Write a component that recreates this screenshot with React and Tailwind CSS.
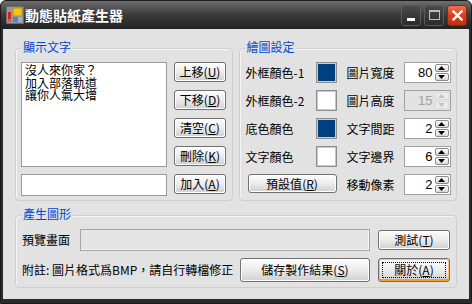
import React from "react";

const FONT = { fontFamily: '"Noto Sans CJK TC", "Liberation Sans", sans-serif' };

const Btn = ({ children, className = "", focused = false }) => (
    <button
        className={
            "relative flex items-center justify-center rounded-[3px] border border-[#707070] bg-linear-to-b from-[#fdfdfd] via-[#ececec] to-[#cfcfcf] text-[12px] leading-none text-black " +
            (focused ? "shadow-[inset_0_-2px_0_#f0a030,inset_0_0_0_1px_#f6c27a] " : "shadow-[inset_0_0_0_1px_#ffffff] ") +
            className
        }
    >
        {focused && <span className="absolute inset-[3px] border border-dotted border-black" />}
        <span className="relative">{children}</span>
    </button>
);

const Mn = ({ k }) => (
    <span>
        (<u className="underline-offset-1">{k}</u>)
    </span>
);

const Group = ({ label, className = "", children }) => (
    <div className={"relative rounded-[4px] border border-[#cfcfcf] shadow-[inset_1px_1px_0_#f4f4f4] " + className}>
        <span className="absolute left-[5px] top-[-9px] bg-[#e2e2e2] px-[2px] text-[12px] leading-[14px] text-[#0046d5]">
            {label}
        </span>
        {children}
    </div>
);

const Arrow = ({ up, disabled }) => (
    <svg width="7" height="4" viewBox="0 0 7 4">
        <polygon points={up ? "0,4 3.5,0 7,4" : "0,0 3.5,4 7,0"} fill={disabled ? "#c4c4c4" : "#000"} />
    </svg>
);

const Spin = ({ value, disabled = false }) => (
    <div
        className={
            "flex h-[21px] w-[47px] border border-[#a0a0a0] " +
            (disabled ? "bg-[#e2e2e2]" : "bg-white")
        }
    >
        <div
            className={
                "flex flex-1 items-center justify-end pr-[2px] text-[13px] leading-none " +
                (disabled ? "text-[#a0a0a0]" : "text-black")
            }
            style={{ fontFamily: '"Liberation Sans", sans-serif' }}
        >
            {value}
        </div>
        <div className="flex w-[15px] flex-col gap-[1px] py-[1px] pr-[1px]">
            {[true, false].map(up => (
                <div
                    key={up ? "u" : "d"}
                    className={
                        "flex flex-1 items-center justify-center rounded-[2px] border " +
                        (disabled
                            ? "border-[#dcdcdc] bg-[#ebebeb]"
                            : "border-[#8a8a8a] bg-linear-to-b from-white to-[#d8d8d8]")
                    }
                >
                    <Arrow up={up} disabled={disabled} />
                </div>
            ))}
        </div>
    </div>
);

const Swatch = ({ color }) => (
    <div className="h-[21px] w-[21px] border border-[#8e8e8e] shadow-[inset_0_0_0_1px_#c9c9c9]" style={{ backgroundColor: color }} />
);

const AppIcon = () => (
    <svg width="18" height="18" viewBox="0 0 18 18">
        <rect x="0.5" y="0.5" width="17" height="17" fill="#9a9a9a" stroke="#6a6a6a" />
        <rect x="2" y="6" width="3" height="7" fill="#d42020" />
        <rect x="2" y="13" width="3" height="3" fill="#e05050" />
        <rect x="7" y="2" width="9" height="8" fill="#f4c21a" stroke="#c08a00" strokeWidth="0.8" />
        <rect x="7" y="11" width="5" height="5" fill="#4a86d8" />
        <rect x="12" y="11" width="4" height="5" fill="#8ab4ee" />
    </svg>
);

const TitleBtn = ({ children, red = false }) => (
    <div
        className={
            "flex h-[21px] w-[20px] items-center justify-center rounded-[3px] border " +
            (red
                ? "border-[#7a2a18] bg-linear-to-b from-[#f07050] via-[#d8401c] to-[#c03010]"
                : "border-[#5c5c5c] bg-linear-to-b from-[#4a4a4a] to-[#2a2a2a]")
        }
    >
        {children}
    </div>
);

export default function App() {
    return (
        <div className="h-[304px] w-[472px] overflow-hidden bg-white" style={FONT}>
            <div className="flex h-full flex-col rounded-t-[6px] border border-[#1a1a1a] bg-[#2b2b2b]">
                {/* title bar */}
                <div className="flex h-[28px] items-center rounded-t-[5px] bg-linear-to-b from-[#6e6e6e] via-[#3a3a3a] to-[#222] pl-[5px] pr-[4px]">
                    <AppIcon />
                    <span className="ml-[1px] text-[14px] font-bold leading-none text-white">動態貼紙產生器</span>
                    <div className="ml-auto flex gap-[3px]">
                        <TitleBtn>
                            <div className="mt-[9px] h-[3px] w-[8px] bg-white" />
                        </TitleBtn>
                        <TitleBtn>
                            <div className="h-[10px] w-[11px] border border-[#bdbdbd] border-t-2" />
                        </TitleBtn>
                        <TitleBtn red>
                            <svg width="11" height="11" viewBox="0 0 11 11">
                                <path d="M1.5 1.5 L9.5 9.5 M9.5 1.5 L1.5 9.5" stroke="#fff" strokeWidth="2.4" strokeLinecap="square" />
                            </svg>
                        </TitleBtn>
                    </div>
                </div>

                {/* client area */}
                <div className="mx-[2px] mb-[4px] flex flex-1 flex-col bg-[#e2e2e2] px-[12px] pb-[10px] pt-[19px] text-[12px] text-black">
                    <div className="flex gap-[6px]">
                        <Group label="顯示文字" className="h-[153px] w-[218px]">
                            <div className="flex gap-[7px] pl-[5px] pt-[13px]">
                                <div className="flex flex-col gap-[7px]">
                                    <textarea
                                        readOnly
                                        className="h-[105px] w-[146px] resize-none overflow-hidden border border-[#9a9a9a] bg-white px-[3px] pt-[1px] text-[12px] leading-[12.5px] text-black outline-none"
                                        style={FONT}
                                        defaultValue={"沒人來你家？\n加入部落軌道\n讓你人氣大增"}
                                    />
                                    <div className="h-[22px] w-[146px] border border-[#9a9a9a] bg-white" />
                                </div>
                                <div className="flex flex-col gap-[8px]">
                                    <Btn className="h-[20px] w-[52px]">上移<Mn k="U" /></Btn>
                                    <Btn className="h-[20px] w-[52px]">下移<Mn k="D" /></Btn>
                                    <Btn className="h-[20px] w-[52px]">清空<Mn k="C" /></Btn>
                                    <Btn className="h-[20px] w-[52px]">刪除<Mn k="K" /></Btn>
                                    <Btn className="h-[20px] w-[52px]">加入<Mn k="A" /></Btn>
                                </div>
                            </div>
                        </Group>

                        <Group label="繪圖設定" className="h-[153px] w-[219px]">
                            <div className="grid grid-cols-[70px_31px_57px_47px] grid-rows-[22px_22px_22px_22px_22px] gap-y-[6px] pl-[6px] pt-[13px]">
                                <span className="self-center">外框顏色-1</span>
                                <Swatch color="#003f80" />
                                <span className="self-center">圖片寬度</span>
                                <Spin value="80" />

                                <span className="self-center">外框顏色-2</span>
                                <Swatch color="#ffffff" />
                                <span className="self-center">圖片高度</span>
                                <Spin value="15" disabled />

                                <span className="self-center">底色顏色</span>
                                <Swatch color="#003f80" />
                                <span className="self-center">文字間距</span>
                                <Spin value="2" />

                                <span className="self-center">文字顏色</span>
                                <Swatch color="#ffffff" />
                                <span className="self-center">文字邊界</span>
                                <Spin value="6" />

                                <div className="col-span-2 pl-[2px]">
                                    <Btn className="h-[19px] w-[89px]">預設值<Mn k="R" /></Btn>
                                </div>
                                <span className="self-center">移動像素</span>
                                <Spin value="2" />
                            </div>
                        </Group>
                    </div>

                    <Group label="產生圖形" className="mt-[14px]">
                        <div className="flex flex-col gap-[7px] pb-[5px] pl-[6px] pr-[5px] pt-[13px]">
                            <div className="flex items-center">
                                <span className="w-[58px]">預覽畫面</span>
                                <div className="h-[22px] w-[290px] border border-[#a6a6a6] bg-[#e4e4e4] shadow-[inset_-1px_-1px_0_#f6f6f6]" />
                                <Btn className="ml-[8px] h-[20px] w-[72px]">測試<Mn k="T" /></Btn>
                            </div>
                            <div className="flex items-center">
                                <span className="w-[218px] whitespace-nowrap">附註: 圖片格式爲BMP，請自行轉檔修正</span>
                                <Btn className="h-[24px] w-[130px]">儲存製作結果<Mn k="S" /></Btn>
                                <Btn focused className="ml-[8px] h-[24px] w-[72px]">關於<Mn k="A" /></Btn>
                            </div>
                        </div>
                    </Group>
                </div>
            </div>
        </div>
    );
}
